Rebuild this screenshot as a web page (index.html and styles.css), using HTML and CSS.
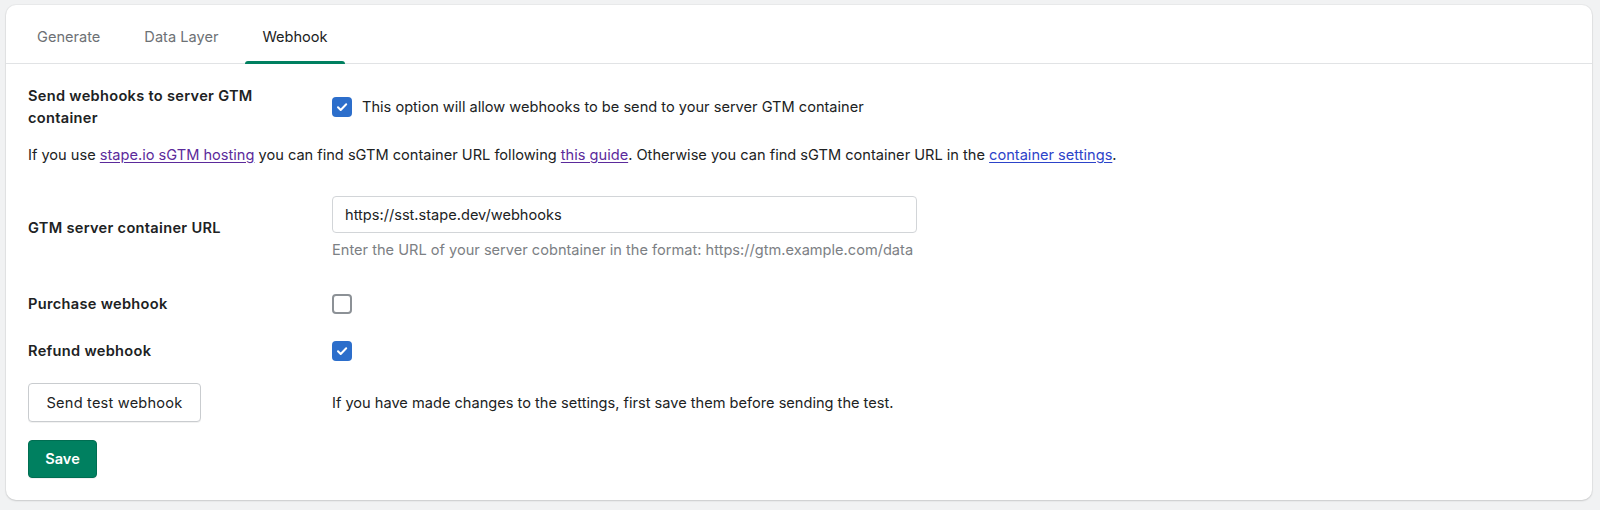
FILE: index.html
```html
<!DOCTYPE html>
<html lang="en">
<head>
<meta charset="utf-8">
<title>Webhook settings</title>
<link rel="stylesheet" href="styles.css">
</head>
<body>
<div class="card">
  <div class="tabs">
    <div class="tab">Generate</div>
    <div class="tab">Data Layer</div>
    <div class="tab tab-active">Webhook</div>
  </div>
  <div class="content">
    <div class="row row-first">
      <div class="label">Send webhooks to server GTM<br>container</div>
      <div class="control inline">
        <span class="cb cb-on"><svg viewBox="0 0 20 20" width="20" height="20"><path d="M6 10.3l2.7 2.7L14.2 7.2" fill="none" stroke="#fff" stroke-width="2" stroke-linecap="round" stroke-linejoin="round"/></svg></span>
        <span class="cb-text">This option will allow webhooks to be send to your server GTM container</span>
      </div>
    </div>
    <p class="info">If you use <a class="link visited" href="#">stape.io sGTM hosting</a> you can find sGTM container URL following <a class="link visited" href="#">this guide</a>. Otherwise you can find sGTM container URL in the <a class="link" href="#">container settings</a>.</p>
    <div class="row row-url">
      <div class="label">GTM server container URL</div>
      <div class="control">
        <div class="input">https://sst.stape.dev/webhooks</div>
        <div class="help">Enter the URL of your server cobntainer in the format: https://gtm.example.com/data</div>
      </div>
    </div>
    <div class="row row-purchase">
      <div class="label">Purchase webhook</div>
      <div class="control inline"><span class="cb cb-off"></span></div>
    </div>
    <div class="row row-refund">
      <div class="label">Refund webhook</div>
      <div class="control inline">
        <span class="cb cb-on"><svg viewBox="0 0 20 20" width="20" height="20"><path d="M6 10.3l2.7 2.7L14.2 7.2" fill="none" stroke="#fff" stroke-width="2" stroke-linecap="round" stroke-linejoin="round"/></svg></span>
      </div>
    </div>
    <div class="row row-test">
      <div class="btn-cell"><button class="btn btn-test">Send test webhook</button></div>
      <div class="control hint">If you have made changes to the settings, first save them before sending the test.</div>
    </div>
    <div class="save-row">
      <button class="btn btn-primary">Save</button>
    </div>
  </div>
</div>
</body>
</html>
```
FILE: styles.css
```css
* { box-sizing: border-box; }
html, body { margin: 0; }
body {
  background: #f1f2f3;
  padding: 5px 8px 10px 6px;
  font-family: Inter, "Noto Sans", "Liberation Sans", sans-serif;
  font-size: 14.6px;
  color: #202223;
}
.card {
  background: #fff;
  border-radius: 10px;
  box-shadow: 0 1px 2px rgba(0,0,0,0.14), 0 0 0 1px rgba(0,0,0,0.03);
  height: 495px;
}
.tabs {
  display: flex;
  gap: 10px;
  padding-left: 14px;
  height: 59px;
  border-bottom: 1px solid #e1e3e5;
}
.tab {
  padding: 5px 17px 0;
  display: flex;
  align-items: center;
  color: #6d7175;
  position: relative;
  line-height: 20px;
}
.tab-active { color: #202223; }
.tab-active::after {
  content: "";
  position: absolute;
  left: 0; right: 0; bottom: -1px;
  height: 3px;
  background: #008060;
  border-radius: 3px 3px 0 0;
}
.content { padding: 0 22px; }
.row {
  display: grid;
  grid-template-columns: 304px 1fr;
  align-items: center;
}
.label { font-weight: 600; line-height: 22px; letter-spacing: 0.3px; }
.control.inline { display: flex; align-items: center; gap: 10px; }
.row-first { margin-top: 21px; }
.cb {
  width: 20px; height: 20px;
  border-radius: 4px;
  display: inline-block;
  flex: none;
}
.cb svg { display: block; }
.cb-on { background: #2c6ecb; }
.cb-off { border: 2px solid #8c9196; }
.cb-text { line-height: 20px; }
.info { margin: 16px 0 0; line-height: 20px; }
.link { color: #2c43c9; text-decoration: underline; text-underline-offset: 2px; }
.link.visited { color: #5b2a9b; }
.row-url { margin-top: 31px; }
.input {
  width: 585px;
  height: 37px;
  border: 1px solid #d2d5d8;
  border-radius: 4px;
  padding: 0 12px;
  display: flex;
  align-items: center;
}
.help { color: #7c8084; line-height: 20px; margin-top: 7px; }
.row-purchase { margin-top: 33px; }
.row-refund { margin-top: 25px; }
.row-test { margin-top: 21px; }
.btn-cell { display: flex; }
.btn {
  font-family: inherit;
  font-size: 14.6px;
  height: 39px;
  padding: 0;
  border: 1px solid #c9cccf;
  border-radius: 4px;
  background: #fff;
  color: #202223;
  box-shadow: 0 1px 0 rgba(0,0,0,0.05);
  font-weight: 400;
  white-space: nowrap;
}
.btn-test { width: 173px; letter-spacing: 0.2px; }
.hint { line-height: 20px; }
.save-row { margin-top: 18px; }
.btn-primary {
  background: #008060;
  border-color: #006e52;
  color: #fff;
  font-weight: 600;
  height: 38px;
  width: 69px;
}
```
